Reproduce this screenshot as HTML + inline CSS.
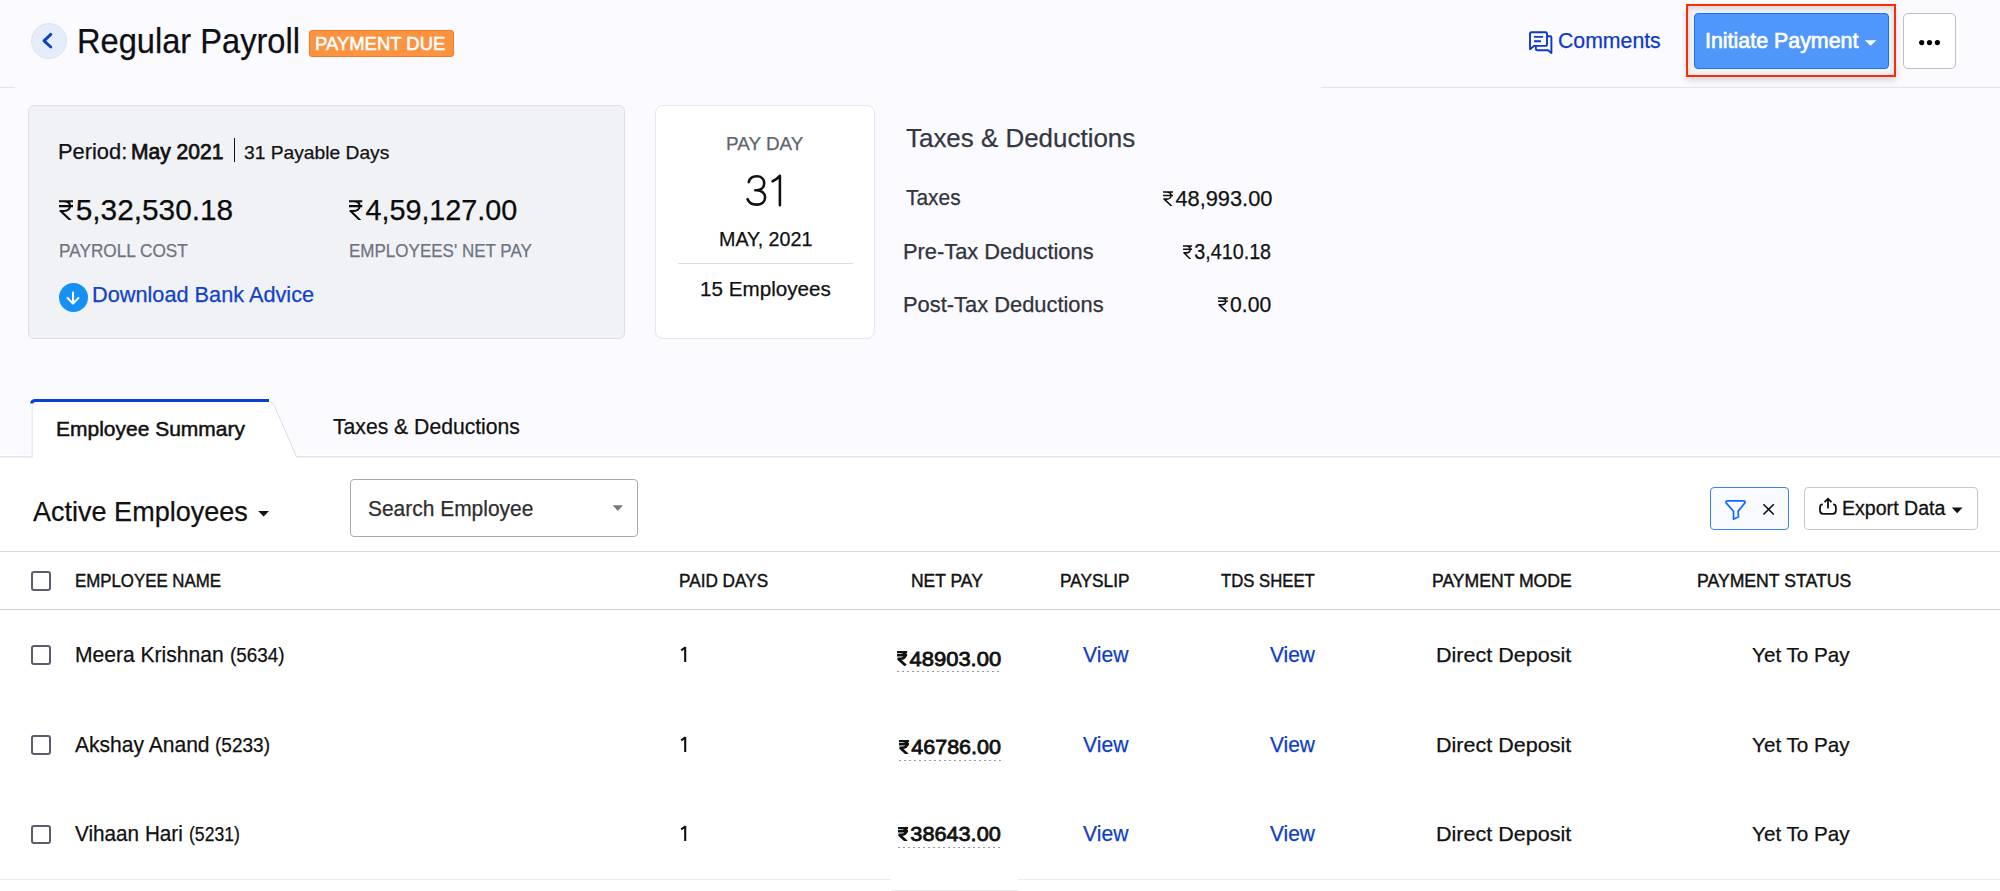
<!DOCTYPE html><html><head><meta charset="utf-8"><title>Regular Payroll</title><style>
html,body{margin:0;padding:0;}
body{width:2000px;height:891px;overflow:hidden;position:relative;background:#fff;font-family:"Liberation Sans",sans-serif;}
.t{position:absolute;line-height:1;white-space:nowrap;transform-origin:0 0;}
.rp{display:inline-block;height:0.688em;width:0.47em;margin-right:0.1em;vertical-align:baseline}
.bl{display:inline-block;width:0;height:0}
svg.ic{position:absolute;overflow:visible}
</style></head><body>
<div style="position:absolute;left:0.00px;top:0.00px;width:2000.00px;height:455.00px;background:#fbfbff"></div>
<div style="position:absolute;left:0.00px;top:87.00px;width:15.00px;height:1.00px;background:#e4e4e8"></div>
<div style="position:absolute;left:1321.00px;top:87.00px;width:679.00px;height:1.00px;background:#e4e4e8"></div>
<div style="position:absolute;left:31.00px;top:23.00px;width:36.00px;height:36.00px;background:#e5ecfa;border-radius:50%;box-sizing:border-box;border:1px solid #d9e3f6"></div>
<svg class="ic" style="left:0;top:0" width="100" height="100"><path d="M50.8 34.4L44 40.9L50.8 47" fill="none" stroke="#0c40c8" stroke-width="2.9" stroke-linecap="round" stroke-linejoin="round"/></svg>
<div style="position:absolute;left:308.50px;top:30.00px;width:145.50px;height:27.00px;background:#fb9341;border:1px solid #f97a22;border-radius:3px;box-sizing:border-box"></div>
<svg class="ic" style="left:1520px;top:21.2px" width="40" height="40"><path d="M10 25V12.8a1.6 1.6 0 0 1 1.6-1.6H25.4a1.6 1.6 0 0 1 1.6 1.6V23.3a1.6 1.6 0 0 1-1.6 1.6H14L10 28.2Z" fill="none" stroke="#0d39c6" stroke-width="1.9" stroke-linejoin="round"/><path d="M27 15.3H30.3a1.1 1.1 0 0 1 1.1 1.1V32.1L28.1 29.3H17.2a1.3 1.3 0 0 1-1.3-1.3V25" fill="none" stroke="#0d39c6" stroke-width="1.9" stroke-linejoin="round"/><path d="M14 15.9H23M14 20.3H21" stroke="#0d39c6" stroke-width="1.9"/></svg>
<div style="position:absolute;left:1686.30px;top:3.80px;width:209.70px;height:72.90px;border:2.5px solid #fe2a05;box-sizing:border-box;background:#f4f4f7;box-shadow:0 4px 6px rgba(0,0,0,0.13), inset 0 2px 6px rgba(0,0,0,0.13)"></div>
<div style="position:absolute;left:1693.50px;top:13.00px;width:195.50px;height:56.00px;background:#5097fc;border:1.5px solid #1670ff;border-radius:4px;box-sizing:border-box;box-shadow:0 1px 0 #fdf1cc"></div>
<svg class="ic" style="left:1860px;top:35px" width="24" height="16"><path d="M4.8 5.2H16.4L10.6 10.7Z" fill="#fff"/></svg>
<div style="position:absolute;left:1903.00px;top:13.00px;width:53.00px;height:55.80px;background:#fff;border:1px solid #bdbdc2;border-radius:5px;box-sizing:border-box"></div>
<svg class="ic" style="left:1900px;top:30px" width="50" height="25"><circle cx="21.7" cy="12.6" r="2.6" fill="#000"/><circle cx="29.5" cy="12.6" r="2.6" fill="#000"/><circle cx="37.4" cy="12.6" r="2.6" fill="#000"/></svg>
<div style="position:absolute;left:28.00px;top:105.00px;width:597.00px;height:234.00px;background:#f1f2f6;border:1px solid #dddfe6;border-radius:6px;box-sizing:border-box"></div>
<div style="position:absolute;left:233.80px;top:138.40px;width:1.60px;height:24.00px;background:#111"></div>
<div style="position:absolute;left:58.50px;top:283.00px;width:29.00px;height:29.00px;background:#1690f2;border-radius:50%"></div>
<svg class="ic" style="left:50px;top:280px" width="40" height="40"><path d="M23 12.5V23.5M17.6 18L23 23.6L28.4 18" fill="none" stroke="#fff" stroke-width="2" stroke-linecap="round" stroke-linejoin="round"/></svg>
<div style="position:absolute;left:654.90px;top:105.00px;width:220.40px;height:234.00px;background:#fff;border:1px solid #e6e7ec;border-radius:8px;box-sizing:border-box"></div>
<div style="position:absolute;left:677.80px;top:263.00px;width:175.00px;height:1.00px;background:#dcdce0"></div>
<div style="position:absolute;left:0.00px;top:456.00px;width:2000.00px;height:1.00px;background:#e4e3e8"></div>
<div style="position:absolute;left:0.00px;top:457.00px;width:2000.00px;height:1.00px;background:#f4f4f2"></div>
<svg class="ic" style="left:0;top:390px" width="320" height="80"><path d="M31.7 68V13.5Q31.7 9.5 36 9.5H269Q272 9.5 274 13.5L297 68Z" fill="#fff"/><path d="M32.2 68V14" stroke="#e2e2e6" stroke-width="1" fill="none"/><path d="M269.5 11Q272.5 12 274.3 15.5L296.8 67.5" stroke="#dcdce0" stroke-width="1" fill="none"/><path d="M31.7 13.5Q31.7 10.5 35.5 10.5H269" stroke="#0b3fd0" stroke-width="3" fill="none"/></svg>
<svg class="ic" style="left:250px;top:505px" width="30" height="20"><path d="M8.2 6H19L13.6 11.5Z" fill="#111"/></svg>
<div style="position:absolute;left:349.60px;top:479.30px;width:288.00px;height:57.30px;background:#fff;border:1px solid #a9a9ad;border-radius:4px;box-sizing:border-box"></div>
<svg class="ic" style="left:600px;top:500px" width="30" height="20"><path d="M12.8 5.3H22.9L17.85 11.1Z" fill="#79797d"/></svg>
<div style="position:absolute;left:1710.20px;top:486.50px;width:78.50px;height:43.50px;background:#f8faff;border:1.5px solid #3a80f6;border-radius:4px;box-sizing:border-box"></div>
<svg class="ic" style="left:1720px;top:495px" width="60" height="30"><path d="M8 5.9H23.2Q25.9 5.9 24.7 8.1L18.1 16.3L18.5 21.8L13.5 24.2V16.3L6.3 8.1Q5.1 5.9 8 5.9Z" fill="none" stroke="#0f69fb" stroke-width="1.7" stroke-linejoin="round"/><path d="M43.4 9.3L53.8 19.5M53.8 9.3L43.4 19.5" stroke="#111" stroke-width="1.6"/></svg>
<div style="position:absolute;left:1804.40px;top:486.50px;width:173.30px;height:43.50px;background:#fff;border:1.5px solid #c7c7cb;border-radius:4px;box-sizing:border-box"></div>
<svg class="ic" style="left:1810px;top:490px" width="40" height="30"><path d="M12.8 14.3H12.6Q10 14.3 10 17.6V20.6Q10 23.9 13.3 23.9H22.6Q25.9 23.9 25.9 20.6V17.6Q25.9 14.3 23.3 14.3H23.1" fill="none" stroke="#111" stroke-width="1.8"/><path d="M18 18.6V9.2M14.5 12.1L18 8.7L21.5 12.1" fill="none" stroke="#111" stroke-width="1.8" stroke-linejoin="miter"/></svg>
<svg class="ic" style="left:1945px;top:500px" width="30" height="20"><path d="M6.8 7.5H17.6L12.2 13.3Z" fill="#111"/></svg>
<div style="position:absolute;left:0.00px;top:551.00px;width:2000.00px;height:1.00px;background:#d9d9dc"></div>
<div style="position:absolute;left:31.30px;top:571.00px;width:19.50px;height:19.50px;border:2px solid #5b5c6e;border-radius:3px;box-sizing:border-box;background:#fff"></div>
<div style="position:absolute;left:0.00px;top:609.00px;width:2000.00px;height:1.00px;background:#d2d2d6"></div>
<div style="position:absolute;left:31.30px;top:645.00px;width:19.50px;height:19.50px;border:2px solid #5b5c6e;border-radius:3px;box-sizing:border-box;background:#fff"></div>
<div style="position:absolute;left:31.30px;top:735.40px;width:19.50px;height:19.50px;border:2px solid #5b5c6e;border-radius:3px;box-sizing:border-box;background:#fff"></div>
<div style="position:absolute;left:31.30px;top:824.70px;width:19.50px;height:19.50px;border:2px solid #5b5c6e;border-radius:3px;box-sizing:border-box;background:#fff"></div>
<div style="position:absolute;left:896.60px;top:671.20px;width:104.60px;height:1.30px;background:repeating-linear-gradient(90deg,#9a9aa0 0,#9a9aa0 1.6px,transparent 1.6px,transparent 5px)"></div>
<div style="position:absolute;left:898.80px;top:759.60px;width:102.40px;height:1.30px;background:repeating-linear-gradient(90deg,#9a9aa0 0,#9a9aa0 1.6px,transparent 1.6px,transparent 5px)"></div>
<div style="position:absolute;left:897.60px;top:846.70px;width:103.60px;height:1.30px;background:repeating-linear-gradient(90deg,#9a9aa0 0,#9a9aa0 1.6px,transparent 1.6px,transparent 5px)"></div>
<div style="position:absolute;left:0.00px;top:879.00px;width:891.00px;height:1.00px;background:#ebebed"></div>
<div style="position:absolute;left:1018.00px;top:879.00px;width:982.00px;height:1.00px;background:#ebebed"></div>
<div style="position:absolute;left:891.00px;top:890.00px;width:127.00px;height:1.00px;background:#ebebed"></div>
<svg class="ic" style="left:740px;top:170px" width="50" height="40"><path d="M8.8 12.1C9.5 8.3 12.5 6.3 16.8 6.3C21.2 6.3 24.2 9 24.2 13.2C24.2 17.3 21 20.2 16.5 20.2H15.3M16.5 20.2C21.6 20.2 25.1 23.3 25.1 27.3C25.1 31.8 21.5 34.6 16.6 34.6C12.2 34.6 8.9 32.6 7.6 29.2M32.6 11.3C35.5 10 37.8 8.2 39.5 6.2M39.9 5.9V35.3" fill="none" stroke="#111" stroke-width="2.6" stroke-linecap="round"/></svg>
<svg class="ic" style="left:670px;top:641.85px" width="30" height="30"><path d="M11.2 8.40L15.4 5.40M15.2 4.90V20.00" fill="none" stroke="#111" stroke-width="2.1" stroke-linecap="butt"/></svg>
<svg class="ic" style="left:670px;top:731.90px" width="30" height="30"><path d="M11.2 8.40L15.4 5.40M15.2 4.90V20.00" fill="none" stroke="#111" stroke-width="2.1" stroke-linecap="butt"/></svg>
<svg class="ic" style="left:670px;top:821.40px" width="30" height="30"><path d="M11.2 8.40L15.4 5.40M15.2 4.90V20.00" fill="none" stroke="#111" stroke-width="2.1" stroke-linecap="butt"/></svg>
<div class="t" id="title" style="left:76.63px;top:24.20px;font-size:34.45px;font-weight:400;color:#0e0f14;-webkit-text-stroke:0.25px currentColor;transform:scaleX(0.9472)">Regular Payroll<span class="bl"></span></div>
<div class="t" id="badge" style="left:315.01px;top:34.91px;font-size:18.75px;font-weight:400;color:#ffffff;-webkit-text-stroke:0.55px currentColor;transform:scaleX(0.9847)">PAYMENT DUE<span class="bl"></span></div>
<div class="t" id="comments" style="left:1557.51px;top:31.11px;font-size:21.51px;font-weight:400;color:#0d39c6;-webkit-text-stroke:0.25px currentColor;transform:scaleX(0.9883)">Comments<span class="bl"></span></div>
<div class="t" id="initiate" style="left:1705.09px;top:30.41px;font-size:22.38px;font-weight:400;color:#ffffff;-webkit-text-stroke:0.70px currentColor;transform:scaleX(0.9560)">Initiate Payment<span class="bl"></span></div>
<div class="t" id="period" style="left:57.98px;top:140.51px;font-size:21.58px;font-weight:400;color:#111;-webkit-text-stroke:0.25px currentColor;transform:scaleX(1.0124)">Period:<span class="bl"></span></div>
<div class="t" id="may" style="left:130.53px;top:140.51px;font-size:21.58px;font-weight:400;color:#111;-webkit-text-stroke:0.75px currentColor;transform:scaleX(0.9743)">May 2021<span class="bl"></span></div>
<div class="t" id="payable" style="left:244.49px;top:142.50px;font-size:19.04px;font-weight:400;color:#111;-webkit-text-stroke:0.25px currentColor;transform:scaleX(1.0098)">31 Payable Days<span class="bl"></span></div>
<div class="t" id="amt1" style="left:58.75px;top:195.00px;font-size:29.80px;font-weight:400;color:#0b0b0b;-webkit-text-stroke:0.25px currentColor;transform:scaleX(1.0000)"><svg class="rp" viewBox="0 0 14 21" preserveAspectRatio="none"><path d="M0 1.3H14M0 6.2H14M0 1.3H4.8C9.3 1.3 11 3.5 11 6.2C11 9 9 11.3 4.8 11.3H0.6M1.6 11.3L11.8 21" fill="none" stroke="currentColor" stroke-width="2.2"/></svg>5,32,530.18<span class="bl"></span></div>
<div class="t" id="amt2" style="left:349.24px;top:195.00px;font-size:29.80px;font-weight:400;color:#0b0b0b;-webkit-text-stroke:0.25px currentColor;transform:scaleX(0.9655)"><svg class="rp" viewBox="0 0 14 21" preserveAspectRatio="none"><path d="M0 1.3H14M0 6.2H14M0 1.3H4.8C9.3 1.3 11 3.5 11 6.2C11 9 9 11.3 4.8 11.3H0.6M1.6 11.3L11.8 21" fill="none" stroke="currentColor" stroke-width="2.2"/></svg>4,59,127.00<span class="bl"></span></div>
<div class="t" id="pcost" style="left:58.65px;top:241.00px;font-size:19.26px;font-weight:400;color:#6e7380;-webkit-text-stroke:0.25px currentColor;transform:scaleX(0.8944)">PAYROLL COST<span class="bl"></span></div>
<div class="t" id="netpay" style="left:349.12px;top:241.00px;font-size:19.26px;font-weight:400;color:#6e7380;-webkit-text-stroke:0.25px currentColor;transform:scaleX(0.8835)">EMPLOYEES' NET PAY<span class="bl"></span></div>
<div class="t" id="download" style="left:92.47px;top:285.31px;font-size:21.37px;font-weight:400;color:#1243c6;-webkit-text-stroke:0.25px currentColor;transform:scaleX(1.0167)">Download Bank Advice<span class="bl"></span></div>
<div class="t" id="payday" style="left:726.02px;top:134.32px;font-size:19.19px;font-weight:400;color:#60646e;-webkit-text-stroke:0.25px currentColor;transform:scaleX(0.9845)">PAY DAY<span class="bl"></span></div>
<div class="t" id="may2" style="left:718.50px;top:229.70px;font-size:19.77px;font-weight:400;color:#111;-webkit-text-stroke:0.25px currentColor;transform:scaleX(0.9957)">MAY, 2021<span class="bl"></span></div>
<div class="t" id="emp15" style="left:700.49px;top:278.81px;font-size:20.49px;font-weight:400;color:#111;-webkit-text-stroke:0.25px currentColor;transform:scaleX(1.0078)">15 Employees<span class="bl"></span></div>
<div class="t" id="tdh" style="left:906.00px;top:126.26px;font-size:25.95px;font-weight:400;color:#353842;-webkit-text-stroke:0.25px currentColor;transform:scaleX(1.0000)">Taxes &amp; Deductions<span class="bl"></span></div>
<div class="t" id="taxes" style="left:906.00px;top:188.26px;font-size:21.29px;font-weight:400;color:#30333b;-webkit-text-stroke:0.25px currentColor;transform:scaleX(0.9818)">Taxes<span class="bl"></span></div>
<div class="t" id="taxv" style="left:1162.70px;top:187.56px;font-size:21.88px;font-weight:400;color:#111;-webkit-text-stroke:0.25px currentColor;transform:scaleX(0.9967)"><svg class="rp" viewBox="0 0 14 21" preserveAspectRatio="none"><path d="M0 1.3H14M0 6.2H14M0 1.3H4.8C9.3 1.3 11 3.5 11 6.2C11 9 9 11.3 4.8 11.3H0.6M1.6 11.3L11.8 21" fill="none" stroke="currentColor" stroke-width="2.2"/></svg>48,993.00<span class="bl"></span></div>
<div class="t" id="pre" style="left:903.47px;top:242.26px;font-size:21.29px;font-weight:400;color:#30333b;-webkit-text-stroke:0.25px currentColor;transform:scaleX(1.0261)">Pre-Tax Deductions<span class="bl"></span></div>
<div class="t" id="prev" style="left:1182.99px;top:242.26px;font-size:21.29px;font-weight:400;color:#111;-webkit-text-stroke:0.25px currentColor;transform:scaleX(0.9277)"><svg class="rp" viewBox="0 0 14 21" preserveAspectRatio="none"><path d="M0 1.3H14M0 6.2H14M0 1.3H4.8C9.3 1.3 11 3.5 11 6.2C11 9 9 11.3 4.8 11.3H0.6M1.6 11.3L11.8 21" fill="none" stroke="currentColor" stroke-width="2.2"/></svg>3,410.18<span class="bl"></span></div>
<div class="t" id="post" style="left:903.46px;top:293.90px;font-size:21.22px;font-weight:400;color:#30333b;-webkit-text-stroke:0.25px currentColor;transform:scaleX(1.0311)">Post-Tax Deductions<span class="bl"></span></div>
<div class="t" id="postv" style="left:1218.49px;top:293.90px;font-size:21.22px;font-weight:400;color:#111;-webkit-text-stroke:0.25px currentColor;transform:scaleX(0.9963)"><svg class="rp" viewBox="0 0 14 21" preserveAspectRatio="none"><path d="M0 1.3H14M0 6.2H14M0 1.3H4.8C9.3 1.3 11 3.5 11 6.2C11 9 9 11.3 4.8 11.3H0.6M1.6 11.3L11.8 21" fill="none" stroke="currentColor" stroke-width="2.2"/></svg>0.00<span class="bl"></span></div>
<div class="t" id="tab1" style="left:55.73px;top:418.75px;font-size:20.71px;font-weight:400;color:#111;-webkit-text-stroke:0.50px currentColor;transform:scaleX(1.0141)">Employee Summary<span class="bl"></span></div>
<div class="t" id="tab2" style="left:332.50px;top:415.56px;font-size:21.88px;font-weight:400;color:#111;-webkit-text-stroke:0.25px currentColor;transform:scaleX(0.9668)">Taxes &amp; Deductions<span class="bl"></span></div>
<div class="t" id="active" style="left:32.74px;top:497.97px;font-size:27.78px;font-weight:400;color:#111;-webkit-text-stroke:0.25px currentColor;transform:scaleX(0.9736)">Active Employees<span class="bl"></span></div>
<div class="t" id="search" style="left:367.57px;top:498.00px;font-size:22.24px;font-weight:400;color:#2e2e2e;-webkit-text-stroke:0.25px currentColor;transform:scaleX(0.9422)">Search Employee<span class="bl"></span></div>
<div class="t" id="export" style="left:1842.01px;top:499.10px;font-size:19.77px;font-weight:400;color:#111;-webkit-text-stroke:0.30px currentColor;transform:scaleX(0.9904)">Export Data<span class="bl"></span></div>
<div class="t" id="h_name" style="left:75.13px;top:572.31px;font-size:18.97px;font-weight:400;color:#111;-webkit-text-stroke:0.45px currentColor;transform:scaleX(0.8884)">EMPLOYEE NAME<span class="bl"></span></div>
<div class="t" id="h_paid" style="left:679.12px;top:572.31px;font-size:18.97px;font-weight:400;color:#111;-webkit-text-stroke:0.45px currentColor;transform:scaleX(0.9064)">PAID DAYS<span class="bl"></span></div>
<div class="t" id="h_net" style="left:911.08px;top:572.31px;font-size:18.97px;font-weight:400;color:#111;-webkit-text-stroke:0.45px currentColor;transform:scaleX(0.9221)">NET PAY<span class="bl"></span></div>
<div class="t" id="h_slip" style="left:1059.56px;top:572.31px;font-size:18.97px;font-weight:400;color:#111;-webkit-text-stroke:0.45px currentColor;transform:scaleX(0.9120)">PAYSLIP<span class="bl"></span></div>
<div class="t" id="h_tds" style="left:1221.00px;top:572.31px;font-size:18.97px;font-weight:400;color:#111;-webkit-text-stroke:0.45px currentColor;transform:scaleX(0.8813)">TDS SHEET<span class="bl"></span></div>
<div class="t" id="h_mode" style="left:1432.07px;top:572.31px;font-size:18.97px;font-weight:400;color:#111;-webkit-text-stroke:0.45px currentColor;transform:scaleX(0.9275)">PAYMENT MODE<span class="bl"></span></div>
<div class="t" id="h_status" style="left:1697.11px;top:572.31px;font-size:18.97px;font-weight:400;color:#111;-webkit-text-stroke:0.45px currentColor;transform:scaleX(0.9305)">PAYMENT STATUS<span class="bl"></span></div>
<div class="t" id="r0_name" style="left:75.07px;top:643.86px;font-size:21.80px;font-weight:400;color:#111;-webkit-text-stroke:0.25px currentColor;transform:scaleX(0.9662)">Meera Krishnan<span class="bl"></span></div>
<div class="t" id="r0_id" style="left:229.55px;top:644.86px;font-size:20.06px;font-weight:400;color:#111;-webkit-text-stroke:0.25px currentColor;transform:scaleX(0.9411)">(5634)<span class="bl"></span></div>
<div class="t" id="r0_amt" style="left:896.98px;top:647.91px;font-size:21.08px;font-weight:400;color:#111;-webkit-text-stroke:0.80px currentColor;transform:scaleX(1.0425)"><svg class="rp" viewBox="0 0 14 21" preserveAspectRatio="none"><path d="M0 1.3H14M0 6.2H14M0 1.3H4.8C9.3 1.3 11 3.5 11 6.2C11 9 9 11.3 4.8 11.3H0.6M1.6 11.3L11.8 21" fill="none" stroke="currentColor" stroke-width="3.8"/></svg>48903.00<span class="bl"></span></div>
<div class="t" id="r0_v1" style="left:1082.73px;top:643.85px;font-size:22.53px;font-weight:400;color:#0f3ec6;-webkit-text-stroke:0.25px currentColor;transform:scaleX(0.9389)">View<span class="bl"></span></div>
<div class="t" id="r0_v2" style="left:1270.02px;top:643.85px;font-size:22.53px;font-weight:400;color:#0f3ec6;-webkit-text-stroke:0.25px currentColor;transform:scaleX(0.9295)">View<span class="bl"></span></div>
<div class="t" id="r0_mode" style="left:1435.69px;top:644.85px;font-size:20.64px;font-weight:400;color:#111;-webkit-text-stroke:0.25px currentColor;transform:scaleX(1.0438)">Direct Deposit<span class="bl"></span></div>
<div class="t" id="r0_stat" style="left:1751.50px;top:644.85px;font-size:20.64px;font-weight:400;color:#111;-webkit-text-stroke:0.25px currentColor;transform:scaleX(1.0022)">Yet To Pay<span class="bl"></span></div>
<div class="t" id="r1_name" style="left:75.49px;top:733.91px;font-size:21.80px;font-weight:400;color:#111;-webkit-text-stroke:0.25px currentColor;transform:scaleX(0.9655)">Akshay Anand<span class="bl"></span></div>
<div class="t" id="r1_id" style="left:215.38px;top:734.90px;font-size:20.06px;font-weight:400;color:#111;-webkit-text-stroke:0.25px currentColor;transform:scaleX(0.9486)">(5233)<span class="bl"></span></div>
<div class="t" id="r1_amt" style="left:899.00px;top:736.30px;font-size:21.08px;font-weight:400;color:#111;-webkit-text-stroke:0.80px currentColor;transform:scaleX(1.0203)"><svg class="rp" viewBox="0 0 14 21" preserveAspectRatio="none"><path d="M0 1.3H14M0 6.2H14M0 1.3H4.8C9.3 1.3 11 3.5 11 6.2C11 9 9 11.3 4.8 11.3H0.6M1.6 11.3L11.8 21" fill="none" stroke="currentColor" stroke-width="3.8"/></svg>46786.00<span class="bl"></span></div>
<div class="t" id="r1_v1" style="left:1082.73px;top:733.91px;font-size:22.53px;font-weight:400;color:#0f3ec6;-webkit-text-stroke:0.25px currentColor;transform:scaleX(0.9389)">View<span class="bl"></span></div>
<div class="t" id="r1_v2" style="left:1270.02px;top:733.91px;font-size:22.53px;font-weight:400;color:#0f3ec6;-webkit-text-stroke:0.25px currentColor;transform:scaleX(0.9295)">View<span class="bl"></span></div>
<div class="t" id="r1_mode" style="left:1435.69px;top:734.91px;font-size:20.64px;font-weight:400;color:#111;-webkit-text-stroke:0.25px currentColor;transform:scaleX(1.0438)">Direct Deposit<span class="bl"></span></div>
<div class="t" id="r1_stat" style="left:1751.50px;top:734.91px;font-size:20.64px;font-weight:400;color:#111;-webkit-text-stroke:0.25px currentColor;transform:scaleX(1.0022)">Yet To Pay<span class="bl"></span></div>
<div class="t" id="r2_name" style="left:75.46px;top:823.41px;font-size:21.80px;font-weight:400;color:#111;-webkit-text-stroke:0.25px currentColor;transform:scaleX(0.9504)">Vihaan Hari<span class="bl"></span></div>
<div class="t" id="r2_id" style="left:188.67px;top:824.40px;font-size:20.06px;font-weight:400;color:#111;-webkit-text-stroke:0.25px currentColor;transform:scaleX(0.8784)">(5231)<span class="bl"></span></div>
<div class="t" id="r2_amt" style="left:897.98px;top:823.21px;font-size:21.08px;font-weight:400;color:#111;-webkit-text-stroke:0.80px currentColor;transform:scaleX(1.0283)"><svg class="rp" viewBox="0 0 14 21" preserveAspectRatio="none"><path d="M0 1.3H14M0 6.2H14M0 1.3H4.8C9.3 1.3 11 3.5 11 6.2C11 9 9 11.3 4.8 11.3H0.6M1.6 11.3L11.8 21" fill="none" stroke="currentColor" stroke-width="3.8"/></svg>38643.00<span class="bl"></span></div>
<div class="t" id="r2_v1" style="left:1082.73px;top:823.41px;font-size:22.53px;font-weight:400;color:#0f3ec6;-webkit-text-stroke:0.25px currentColor;transform:scaleX(0.9389)">View<span class="bl"></span></div>
<div class="t" id="r2_v2" style="left:1270.02px;top:823.41px;font-size:22.53px;font-weight:400;color:#0f3ec6;-webkit-text-stroke:0.25px currentColor;transform:scaleX(0.9295)">View<span class="bl"></span></div>
<div class="t" id="r2_mode" style="left:1435.69px;top:824.41px;font-size:20.64px;font-weight:400;color:#111;-webkit-text-stroke:0.25px currentColor;transform:scaleX(1.0438)">Direct Deposit<span class="bl"></span></div>
<div class="t" id="r2_stat" style="left:1751.50px;top:824.41px;font-size:20.64px;font-weight:400;color:#111;-webkit-text-stroke:0.25px currentColor;transform:scaleX(1.0022)">Yet To Pay<span class="bl"></span></div>
</body></html>
